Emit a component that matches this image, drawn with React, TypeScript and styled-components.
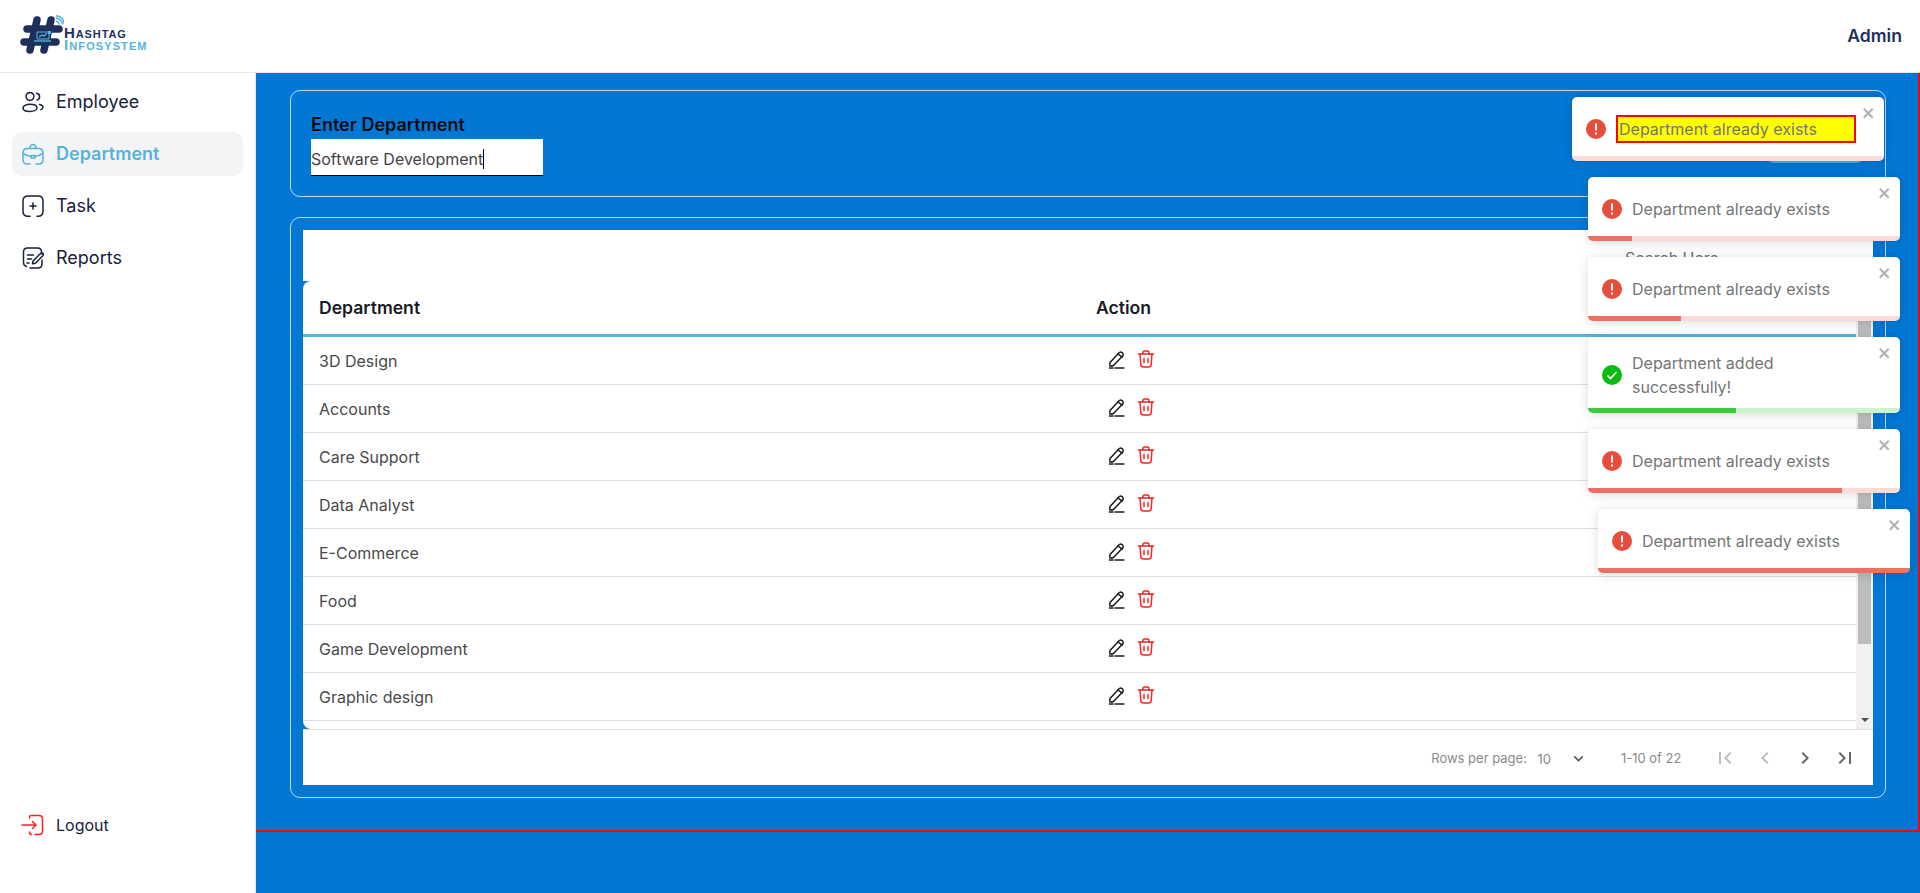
import React from 'react';
import styled, { createGlobalStyle } from 'styled-components';

const blue = '#0277d4';
const teal = '#55b4d9';
const navy = '#1f2f5c';

const GlobalStyle = createGlobalStyle`
    html,
    body {
        margin: 0;
        height: 100%;
        overflow: hidden;
        background: #fff;
        font-family: Inter, 'Liberation Sans', sans-serif;
    }
    * {
        box-sizing: border-box;
    }
`;

const Page = styled.div`
    position: relative;
    display: flex;
    flex-direction: column;
    width: 1920px;
    height: 893px;
`;

const Header = styled.header`
    display: flex;
    align-items: center;
    justify-content: space-between;
    flex: none;
    height: 73px;
    padding: 0 18px 1px 20px;
    border-bottom: 1px solid #e5e7eb;
`;

const Logo = styled.div`
    display: flex;
    align-items: center;
    margin-top: -1px;
`;

const LogoWords = styled.div`
    display: flex;
    flex-direction: column;
    margin-top: 7px;
    font-family: 'Liberation Sans', sans-serif;
    font-variant: small-caps;
    font-weight: 700;
    line-height: 12px;
`;

const LogoWord = styled.span<{ $accent?: boolean }>`
    font-size: 15px;
    letter-spacing: ${({ $accent }) => ($accent ? '1.1px' : '0.9px')};
    color: ${({ $accent }) => ($accent ? teal : navy)};
`;

const UserName = styled.div`
    font-size: 17.6px;
    font-weight: 600;
    color: ${navy};
`;

const Body = styled.div`
    display: flex;
    flex: 1;
    min-height: 0;
`;

const Sidebar = styled.aside`
    display: flex;
    flex-direction: column;
    flex: none;
    width: 256px;
    padding: 7px 12px 0;
    border-right: 1px solid #e5e7eb;
`;

const Nav = styled.nav`
    display: flex;
    flex-direction: column;
    gap: 8px;
    flex: 1;
`;

const NavItem = styled.div<{ $active?: boolean }>`
    display: flex;
    align-items: center;
    gap: 11px;
    height: 44px;
    padding: 0 0 1px 9px;
    border-radius: 10px;
    font-size: 18px;
    font-weight: ${({ $active }) => ($active ? 600 : 400)};
    color: ${({ $active }) => ($active ? teal : '#17203d')};
    background: ${({ $active }) => ($active ? '#f3f4f6' : 'transparent')};
`;

const LogoutItem = styled(NavItem)`
    margin-bottom: 46px;
    font-size: 16px;
    font-weight: 400;
`;

const Content = styled.main`
    flex: 1;
    background: ${blue};
`;

const ContentFrame = styled.div`
    display: flex;
    flex-direction: column;
    gap: 20px;
    height: 759px;
    padding: 17px 32px 0 34px;
    border-right: 2px solid #ff0000;
    border-bottom: 2px solid #ff0000;
`;

const Panel = styled.section`
    border: 1px solid rgba(255, 255, 255, 0.72);
    border-radius: 10px;
`;

const FormPanel = styled(Panel)`
    display: flex;
    align-items: flex-start;
    justify-content: space-between;
    height: 107px;
    padding: 21px 21px 0 20px;
`;

const Field = styled.div`
    display: flex;
    flex-direction: column;
    width: 232px;
`;

const FieldLabel = styled.label`
    height: 27px;
    font-size: 18px;
    font-weight: 600;
    line-height: 26px;
    color: #0c0c14;
`;

const FieldInput = styled.div`
    display: flex;
    align-items: center;
    height: 37px;
    padding-top: 3px;
    background: #fff;
    border-bottom: 1px solid #000;
    font-size: 16px;
    color: #444;
`;

const Caret = styled.span`
    width: 1px;
    height: 20px;
    background: #000;
`;

const AddButton = styled.button`
    width: 98px;
    height: 40px;
    margin-top: 11px;
    border: 0;
    border-radius: 8px;
    background: #52aecb;
    color: #fff;
    font: 600 15px Inter, sans-serif;
`;

const TablePanel = styled(Panel)`
    display: flex;
    flex-direction: column;
    height: 581px;
    padding: 12px;
`;

const SearchBar = styled.div`
    display: flex;
    align-items: center;
    flex: none;
    height: 51px;
    padding: 4px 0 0 1322px;
    background: #fff;
    font-size: 16px;
    color: #6b7280;
`;

const TableArea = styled.div`
    display: flex;
    flex: none;
    height: 448px;
    overflow: hidden;
    border-radius: 8px 0 0 8px;
    background: #fff;
`;

const TableRows = styled.div`
    flex: 1;
    min-width: 0;
`;

const HeadRow = styled.div`
    display: grid;
    grid-template-columns: 777px 1fr;
    align-items: center;
    height: 56px;
    padding-left: 16px;
    border-bottom: 3px solid ${teal};
    font-size: 17.6px;
    font-weight: 600;
    color: #1a1a26;
`;

const Row = styled.div`
    display: grid;
    grid-template-columns: 777px 1fr;
    align-items: center;
    flex: none;
    height: 48px;
    padding-left: 16px;
    border-bottom: 1px solid #e0e0e0;
    font-size: 16px;
    color: #4a4a4a;
`;

const RowActions = styled.div`
    display: flex;
    align-items: center;
    gap: 9px;
    margin: -4px 0 0 11px;
`;

const ScrollTrack = styled.div`
    display: flex;
    flex-direction: column;
    align-items: center;
    flex: none;
    width: 17px;
    background: #f1f1f1;
`;

const ScrollThumb = styled.div`
    width: 13px;
    height: 346px;
    margin: 17px 1px 0 0;
    background: #bdbdbd;
`;

const ScrollArrow = styled.div`
    width: 0;
    height: 0;
    margin-top: auto;
    margin-bottom: 7px;
    border-left: 4px solid transparent;
    border-right: 4px solid transparent;
    border-top: 4px solid #505050;
`;

const Pagination = styled.div`
    display: flex;
    align-items: center;
    flex: 1;
    padding-right: 8px;
    border-top: 1px solid #e0e0e0;
    background: #fff;
    font-size: 13px;
    color: #8a8a8a;
`;

const PageLabel = styled.span`
    margin-left: auto;
`;

const PageSize = styled.span`
    display: flex;
    align-items: center;
    width: 62px;
    margin: 2px 0 0 10.6px;
    gap: 18px;
`;

const PageRange = styled.span`
    margin: 0 23.6px 0 21.4px;
`;

const PageButton = styled.span<{ $off?: boolean }>`
    display: flex;
    align-items: center;
    justify-content: center;
    width: 40px;
    height: 40px;
    color: ${({ $off }) => ($off ? 'rgba(0, 0, 0, 0.26)' : 'rgba(0, 0, 0, 0.6)')};
`;

const ToastStack = styled.div`
    position: absolute;
    top: 97px;
    right: 20px;
    display: flex;
    flex-direction: column;
    gap: 16px;
    width: 312px;
`;

const Toast = styled.div<{ $shift: number; $tall?: boolean }>`
    position: relative;
    display: flex;
    justify-content: space-between;
    height: ${({ $tall }) => ($tall ? '76px' : '64px')};
    padding: 8px;
    overflow: hidden;
    border-radius: 5px;
    background: #fff;
    box-shadow: 0 1px 10px rgba(0, 0, 0, 0.1), 0 2px 15px rgba(0, 0, 0, 0.05);
    transform: translateX(${({ $shift }) => $shift}px);
    font-size: 16px;
    line-height: 24px;
    color: #757575;
`;

const ToastBody = styled.div`
    display: flex;
    align-items: center;
    flex: 1;
    min-width: 0;
    padding: 6px;
`;

const ToastIcon = styled.svg`
    flex: none;
    width: 20px;
    height: 20px;
    margin-right: 10px;
`;

const ToastText = styled.div<{ $marked?: boolean }>`
    flex: 1;
    ${({ $marked }) =>
        $marked &&
        `
        padding-left: 1px;
        border: 2px solid #ff0000;
        background: #ffff00;
    `}
`;

const ToastClose = styled.svg`
    flex: none;
    width: 14px;
    height: 16px;
    opacity: 0.3;
`;

const ToastTrack = styled.div<{ $color: string }>`
    position: absolute;
    left: 0;
    right: 0;
    bottom: 0;
    height: 5px;
    background: ${({ $color }) => $color};
    opacity: 0.2;
`;

const ToastProgress = styled.div<{ $color: string; $value: number }>`
    position: absolute;
    left: 0;
    bottom: 0;
    width: ${({ $value }) => $value}px;
    height: 5px;
    background: ${({ $color }) => $color};
    opacity: 0.75;
`;

const Stroke = styled.svg<{ $size?: number; $color?: string }>`
    flex: none;
    width: ${({ $size }) => $size ?? 24}px;
    height: ${({ $size }) => $size ?? 24}px;
    fill: none;
    color: ${({ $color }) => $color ?? 'inherit'};
    stroke: currentColor;
    stroke-width: 1.5;
    stroke-linecap: round;
    stroke-linejoin: round;
`;

const Glyph = styled.svg<{ $size?: number; $color?: string }>`
    flex: none;
    width: ${({ $size }) => $size ?? 24}px;
    height: ${({ $size }) => $size ?? 24}px;
    color: ${({ $color }) => $color ?? 'inherit'};
    fill: currentColor;
`;

const HashMark = () => (
    <svg width="44" height="40" viewBox="0 0 44 40">
        <g stroke={navy} strokeWidth="7.5" strokeLinecap="round" fill="none">
            <path d="M17 5 10 35" />
            <path d="M31 5 24 35" />
            <path d="M7 14h32" />
            <path d="M4 27h32" />
        </g>
        <path d="M14 16h17v9H14z" fill={navy} />
        <path d="M17 17h12v7H17z" fill="none" stroke={teal} strokeWidth="1" />
        <path d="M14 26h17" stroke={teal} strokeWidth="1.4" />
        <path d="M19 22l3-2 2 1 3-3" fill="none" stroke={teal} strokeWidth="1.2" />
        <path d="M28 16h3v3h-3z" fill={teal} />
        <g stroke={teal} strokeWidth="1.4" fill="none">
            <path d="M36 6c2 .5 3 1.500 3.500 3.500" />
            <path d="M36 3c3.500.5 6 3 6.500 6.500" />
            <path d="M36 .8c5 .5 8 4 8.400 8.700" />
        </g>
    </svg>
);

const EmployeeIcon = () => (
    <Stroke viewBox="0 0 24 24">
        <path d="M9 10.500a4 4 0 1 0-.1 0" />
        <path d="M15.500 3.200c1.900.3 3.100 1.700 3.100 3.500 0 1.500-1 2.900-2.500 3.300" />
        <path d="M9 21.500c-4 0-7-1.400-7-3.500s3-3.800 7-3.800 7 1.500 7 3.600-3 3.700-7 3.700z" />
        <path d="M18.500 14.500c2.100.4 3.500 1.400 3.500 2.700 0 1-.8 1.900-2.200 2.400" />
    </Stroke>
);

const DepartmentIcon = () => (
    <Stroke viewBox="0 0 24 24">
        <path d="M9 5.500c.4-2 1.500-3 3-3s2.600 1 3 3" />
        <path d="M6.500 6.500h11c2.800 0 4.500 1.700 4.500 4.500v6.500c0 2.800-1.700 4.500-4.500 4.500H15" />
        <path d="M9 22H6.500C3.700 22 2 20.300 2 17.500V11c0-2.800 1.700-4.500 4.500-4.500" />
        <path d="M2.200 11.500c3 1.900 5.800 2.800 8.300 3.100" />
        <path d="M21.800 11.500c-3 1.900-5.800 2.800-8.300 3.100" />
        <path d="M10 13.500h4v2.500h-4z" />
    </Stroke>
);

const TaskIcon = () => (
    <Stroke viewBox="0 0 24 24">
        <path d="M9 22.200H7c-3.400 0-5-1.600-5-5V7c0-3.400 1.600-5 5-5h10c3.400 0 5 1.600 5 5v10.200c0 3.400-1.600 5-5 5h-1" />
        <path d="M12 9v6M9 12h6" />
    </Stroke>
);

const ReportsIcon = () => (
    <Stroke viewBox="0 0 24 24">
        <path d="M20.500 8V6c0-2.500-1.500-4-4-4h-10C4 2 2.500 3.500 2.500 6v10c0 2.500 1 4 3 4.500" />
        <path d="M9 22h8c2.500 0 4-1.500 4-4v-4" />
        <path d="M6.500 9h6M6.500 13h4M6 17h2" />
        <path d="M11.500 17.800l.5-2.800 7.500-7.500c.8-.8 1.700-.8 2.400-.1s.7 1.600-.1 2.400l-7.500 7.500z" />
    </Stroke>
);

const LogoutIcon = () => (
    <Stroke viewBox="0 0 24 24" $color="#ff2020">
        <path d="M11 2.500h7c2.300 0 3.500 1.200 3.500 3.500v12c0 2.300-1.200 3.500-3.500 3.500h-4" />
        <path d="M10.500 21.500c-1.500 0-2-.8-2-2.500M8.500 5c0-1.700.5-2.500 1.500-2.500" />
        <path d="M1 12h14M11.500 8.500 15 12l-3.500 3.500" />
    </Stroke>
);

const EditIcon = () => (
    <Stroke viewBox="0 0 20 20" $size={20} $color="#1b1b1b">
        <path d="M3 13.500 11.500 4.300c1.300-1.400 2.800-1.500 3.900-.5s1 2.500-.2 3.800L6.500 16.500c-.9.400-2.400.6-3.500.5-.3-1.100-.2-2.600 0-3.500z" />
        <path d="M11 5l4.200 3.200" />
        <path d="M2.500 19h3.500M8 19h9" />
    </Stroke>
);

const TrashIcon = () => (
    <Stroke viewBox="0 0 20 20" $size={20} $color="#ff2020">
        <path d="M2.500 5h15" />
        <path d="M7 5V3.500C7 2.500 7.800 2 9 2h2c1.200 0 2 .5 2 1.500V5" />
        <path d="M4 5l.8 10.500c.1 1.600 1 2.500 2.700 2.500h5c1.700 0 2.600-.9 2.700-2.500L16 5" />
        <path d="M8 9.500v4M12 9.500v4" />
    </Stroke>
);

const ChevronDown = () => (
    <Glyph viewBox="0 0 24 24" $size={19} $color="#555">
        <path d="M16.590 8.590 12 13.170 7.410 8.590 6 10l6 6 6-6z" />
    </Glyph>
);

const pagerPaths = [
    { d: 'M18.410 16.590 13.820 12l4.590-4.590L17 6l-6 6 6 6zM6 6h2v12H6z', off: true },
    { d: 'M15.410 7.410 14 6l-6 6 6 6 1.410-1.410L10.830 12z', off: true },
    { d: 'M10 6 8.590 7.410 13.170 12l-4.580 4.590L10 18l6-6z', off: false },
    { d: 'M5.590 7.410 10.180 12l-4.590 4.590L7 18l6-6-6-6zM16 6h2v12h-2z', off: false }
];

const departments = [
    '3D Design',
    'Accounts',
    'Care Support',
    'Data Analyst',
    'E-Commerce',
    'Food',
    'Game Development',
    'Graphic design'
];

const toasts = [
    { text: 'Department already exists', ok: false, value: 0, shift: -16, marked: true },
    { text: 'Department already exists', ok: false, value: 44, shift: 0 },
    { text: 'Department already exists', ok: false, value: 93, shift: 0 },
    { text: 'Department added successfully!', ok: true, value: 148, shift: 0, tall: true },
    { text: 'Department already exists', ok: false, value: 254, shift: 0 },
    { text: 'Department already exists', ok: false, value: 312, shift: 10 }
];

const App = () => (
    <Page>
        <GlobalStyle />
        <Header>
            <Logo>
                <HashMark />
                <LogoWords>
                    <LogoWord>Hashtag</LogoWord>
                    <LogoWord $accent>Infosystem</LogoWord>
                </LogoWords>
            </Logo>
            <UserName>Admin</UserName>
        </Header>
        <Body>
            <Sidebar>
                <Nav>
                    <NavItem>
                        <EmployeeIcon />
                        Employee
                    </NavItem>
                    <NavItem $active>
                        <DepartmentIcon />
                        Department
                    </NavItem>
                    <NavItem>
                        <TaskIcon />
                        Task
                    </NavItem>
                    <NavItem>
                        <ReportsIcon />
                        Reports
                    </NavItem>
                </Nav>
                <LogoutItem>
                    <LogoutIcon />
                    Logout
                </LogoutItem>
            </Sidebar>
            <Content>
                <ContentFrame>
                    <FormPanel>
                        <Field>
                            <FieldLabel>Enter Department</FieldLabel>
                            <FieldInput>
                                Software Development
                                <Caret />
                            </FieldInput>
                        </Field>
                        <AddButton>Add</AddButton>
                    </FormPanel>
                    <TablePanel>
                        <SearchBar>Search Here</SearchBar>
                        <TableArea>
                            <TableRows>
                                <HeadRow>
                                    <span>Department</span>
                                    <span>Action</span>
                                </HeadRow>
                                {departments.map(name => (
                                    <Row key={name}>
                                        <span>{name}</span>
                                        <RowActions>
                                            <EditIcon />
                                            <TrashIcon />
                                        </RowActions>
                                    </Row>
                                ))}
                            </TableRows>
                            <ScrollTrack>
                                <ScrollThumb />
                                <ScrollArrow />
                            </ScrollTrack>
                        </TableArea>
                        <Pagination>
                            <PageLabel>Rows per page:</PageLabel>
                            <PageSize>
                                10
                                <ChevronDown />
                            </PageSize>
                            <PageRange>1-10 of 22</PageRange>
                            {pagerPaths.map(({ d, off }) => (
                                <PageButton key={d} $off={off}>
                                    <Glyph viewBox="0 0 24 24">
                                        <path d={d} />
                                    </Glyph>
                                </PageButton>
                            ))}
                        </Pagination>
                    </TablePanel>
                </ContentFrame>
            </Content>
        </Body>
        <ToastStack>
            {toasts.map(({ text, ok, value, shift, marked, tall }, index) => {
                const color = ok ? '#07bc0c' : '#e74c3c';
                return (
                    <Toast key={index} $shift={shift} $tall={tall}>
                        <ToastBody>
                            <ToastIcon viewBox="0 0 20 20">
                                <circle cx="10" cy="10" r="10" fill={color} />
                                {ok ? (
                                    <path d="M5.500 10.500 8.500 13.500 14.500 7" fill="none" stroke="#fff" strokeWidth="1.600" />
                                ) : (
                                    <path d="M9 4.500h2v7H9zM9 13.500h2v2H9z" fill="#fff" />
                                )}
                            </ToastIcon>
                            <ToastText $marked={marked}>{text}</ToastText>
                        </ToastBody>
                        <ToastClose viewBox="0 0 14 16">
                            <path d="M7.710 8.230l3.750 3.750-1.480 1.480-3.750-3.750-3.750 3.750L1 11.980l3.750-3.750L1 4.480 2.480 3l3.750 3.750L9.980 3l1.480 1.480-3.750 3.750z" />
                        </ToastClose>
                        <ToastTrack $color={color} />
                        <ToastProgress $color={color} $value={value} />
                    </Toast>
                );
            })}
        </ToastStack>
    </Page>
);

export default App;
